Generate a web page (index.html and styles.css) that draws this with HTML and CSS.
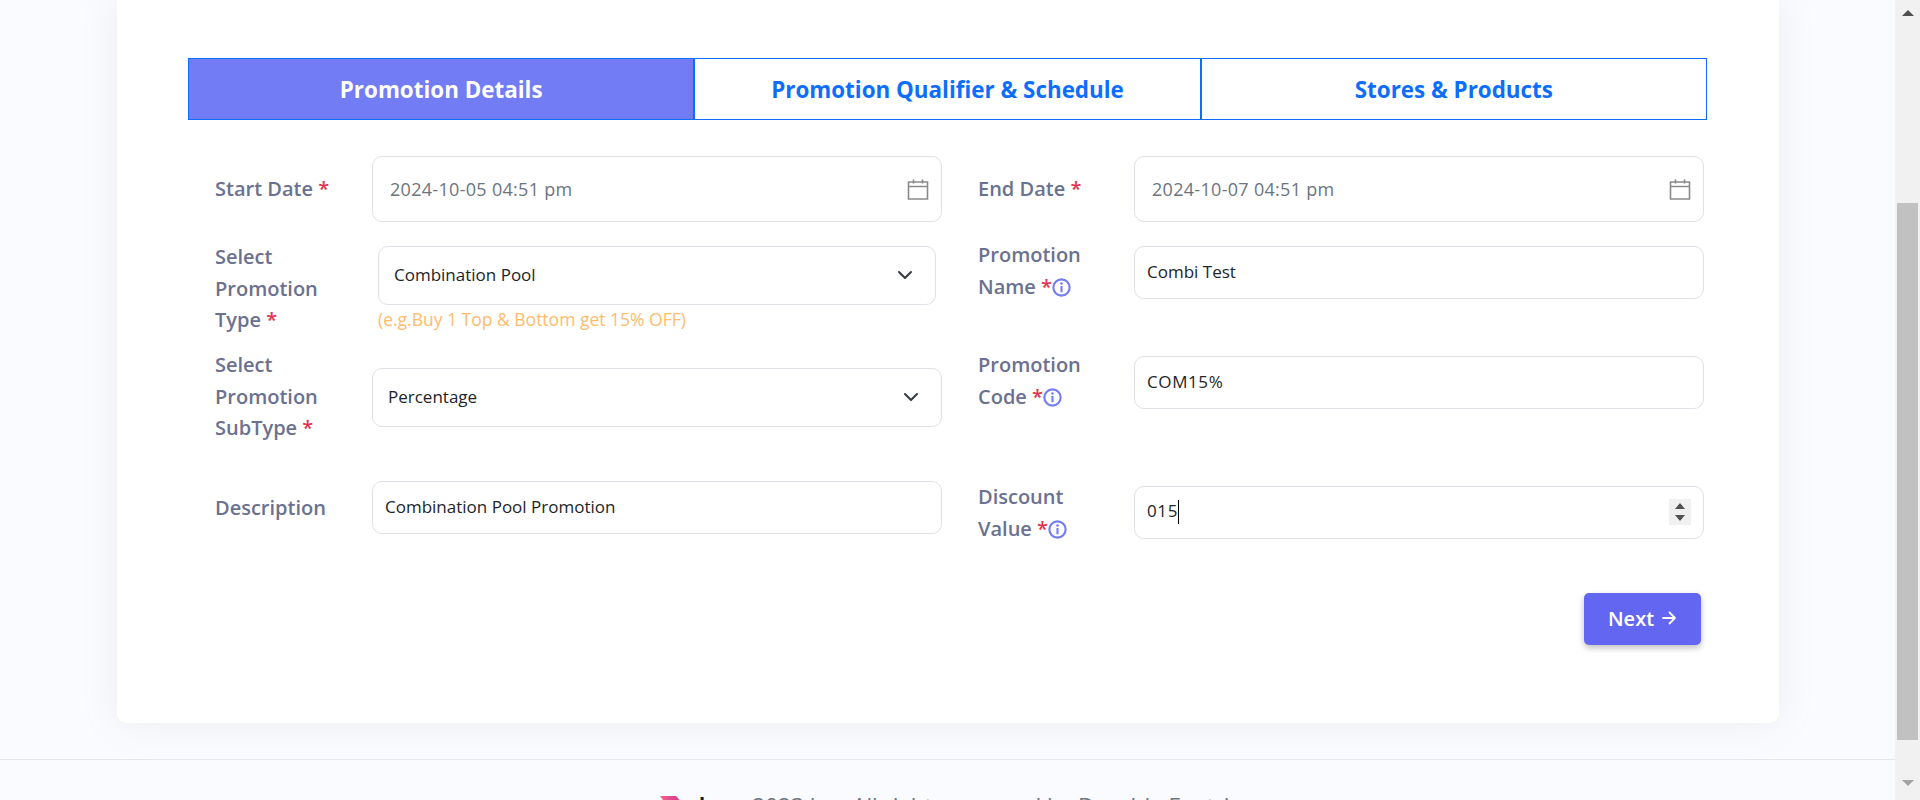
FILE: index.html
```html
<!DOCTYPE html>
<html>
<head>
    <title>Promotion Details</title>
    <link rel="stylesheet" href="styles.css">
</head>
<body>
    <div class="app">
        <div class="page">
            <div class="card">
                <div class="tabs">
                    <div class="tab active">Promotion Details</div>
                    <div class="tab">Promotion Qualifier &amp; Schedule</div>
                    <div class="tab">Stores &amp; Products</div>
                </div>

                <div class="formRow rowDates">
                    <div class="field fieldLeft">
                        <label class="label">Start Date <span class="req">*</span></label>
                        <div class="control dateBox">
                            <span class="dateText">2024-10-05 04:51 pm</span>
                            <svg class="calIcon" width="22" height="22" viewBox="0 0 22 22" fill="none" stroke="#8a8a8a" stroke-width="1.6"><path d="M1.5 4h19v17h-19zM1.5 8.5h19M6.5 1.5v4M15.5 1.5v4"/></svg>
                        </div>
                    </div>
                    <div class="field fieldRight">
                        <label class="label">End Date <span class="req">*</span></label>
                        <div class="control dateBox">
                            <span class="dateText">2024-10-07 04:51 pm</span>
                            <svg class="calIcon" width="22" height="22" viewBox="0 0 22 22" fill="none" stroke="#8a8a8a" stroke-width="1.6"><path d="M1.5 4h19v17h-19zM1.5 8.5h19M6.5 1.5v4M15.5 1.5v4"/></svg>
                        </div>
                    </div>
                </div>

                <div class="formRow rowType">
                    <div class="field fieldLeft top">
                        <label class="label labelType">Select Promotion Type <span class="req">*</span></label>
                        <div class="typeWrap">
                            <div class="control selectBox">
                                <span>Combination Pool</span>
                                <svg class="chev" width="16" height="16" viewBox="0 0 16 16" fill="none" stroke="#343a40" stroke-width="2" stroke-linecap="round" stroke-linejoin="round"><path d="M2 5l6 6 6-6"/></svg>
                            </div>
                            <div class="hint">(e.g.Buy 1 Top &amp; Bottom get 15% OFF)</div>
                        </div>
                    </div>
                    <div class="field fieldRight top">
                        <label class="label">Promotion Name <span class="req">*</span><svg class="info" width="19" height="19" viewBox="0 0 18 18"><circle cx="9" cy="9" r="7.7" fill="none" stroke="#727cf5" stroke-width="2"/><circle cx="9" cy="5.2" r="1.2" fill="#727cf5"/><rect x="8" y="7.5" width="2" height="6" fill="#727cf5"/></svg></label>
                        <div class="control textBox offset7">Combi Test</div>
                    </div>
                </div>

                <div class="formRow rowSub">
                    <div class="field fieldLeft top">
                        <label class="label">Select Promotion SubType <span class="req">*</span></label>
                        <div class="control selectBox subBox">
                            <span>Percentage</span>
                            <svg class="chev" width="16" height="16" viewBox="0 0 16 16" fill="none" stroke="#343a40" stroke-width="2" stroke-linecap="round" stroke-linejoin="round"><path d="M2 5l6 6 6-6"/></svg>
                        </div>
                    </div>
                    <div class="field fieldRight top">
                        <label class="label">Promotion Code <span class="req">*</span><svg class="info" width="19" height="19" viewBox="0 0 18 18"><circle cx="9" cy="9" r="7.7" fill="none" stroke="#727cf5" stroke-width="2"/><circle cx="9" cy="5.2" r="1.2" fill="#727cf5"/><rect x="8" y="7.5" width="2" height="6" fill="#727cf5"/></svg></label>
                        <div class="control textBox offset7"><span class="numValue">COM15%</span></div>
                    </div>
                </div>

                <div class="formRow rowLast">
                    <div class="field fieldLeft">
                        <label class="label">Description</label>
                        <div class="control textBox">Combination Pool Promotion</div>
                    </div>
                    <div class="field fieldRight discount">
                        <label class="label">Discount Value <span class="req">*</span><svg class="info" width="19" height="19" viewBox="0 0 18 18"><circle cx="9" cy="9" r="7.7" fill="none" stroke="#727cf5" stroke-width="2"/><circle cx="9" cy="5.2" r="1.2" fill="#727cf5"/><rect x="8" y="7.5" width="2" height="6" fill="#727cf5"/></svg></label>
                        <div class="control textBox numberBox">
                            <span class="numValue">015<span class="caret"></span></span>
                            <div class="spinner">
                                <span class="spinUp"></span>
                                <span class="spinDown"></span>
                            </div>
                        </div>
                    </div>
                </div>

                <div class="actions">
                    <button class="nextBtn">Next <svg width="16" height="16" viewBox="0 0 16 16" fill="none" stroke="#fff" stroke-width="1.8" stroke-linecap="round" stroke-linejoin="round"><path d="M2 8h12M8.5 2.5L14 8l-5.5 5.5"/></svg></button>
                </div>
            </div>

            <div class="footer">
                <svg class="footLogo" width="24" height="20" viewBox="0 0 24 20"><defs><linearGradient id="logoGrad" x1="0" y1="0" x2="1" y2="0"><stop offset="0" stop-color="#f0648c"/><stop offset="1" stop-color="#d6308f"/></linearGradient></defs><path d="M0 0h16l8 9-8 11H8l6-11-5-5H3z" fill="url(#logoGrad)"/></svg>
                <span class="footBrand">bee</span>
                <span class="footText">2023 Inc. All rights reserved by Dyeable Fantrim</span>
            </div>
        </div>

        <div class="scrollbar">
            <span class="arrowUp"></span>
            <div class="thumb"></div>
            <span class="arrowDown"></span>
        </div>
    </div>
</body>
</html>
```

FILE: styles.css
```css
*{
    box-sizing: border-box;
}
html, body{
    height: 800px;
    overflow: hidden;
}
body{
    margin: 0;
    background-color: #fafbfe;
    font-family: "Open Sans", "Noto Sans", sans-serif;
}
.app{
    display: flex;
    height: 800px;
    overflow: hidden;
}
.page{
    flex: 1;
    min-width: 0;
    height: 800px;
    overflow: hidden;
}
.card{
    height: 723px;
    margin: 0 116px 36px 117px;
    padding: 58px 72px 0 71px;
    background-color: #fff;
    border-radius: 0 0 10px 10px;
    box-shadow: 0 0 35px 0 rgba(154,161,171,.15);
}

/* tabs */
.tabs{
    display: grid;
    grid-template-columns: repeat(3,1fr);
    height: 62px;
    margin-bottom: 36px;
}
.tab{
    display: flex;
    align-items: center;
    justify-content: center;
    font-size: 22.4px;
    font-weight: 700;
    color: #0d6efd;
    border: 1px solid #0d6efd;
}
.tab.active{
    color: #fff;
    background-color: #727cf5;
}

/* form rows */
.formRow{
    display: grid;
    grid-template-columns: 763px 756px;
}
.rowDates{
    height: 83px;
}
.rowType{
    height: 110px;
}
.rowSub{
    height: 132px;
}
.rowLast{
    height: 58px;
    align-items: start;
}
.field{
    display: flex;
    align-items: center;
}
.field.top{
    align-items: flex-start;
}
.fieldLeft{
    padding: 0 9px 0 27px;
}
.fieldRight{
    padding: 0 3px 0 27px;
}
.rowDates .field{
    align-items: flex-start;
}
.rowDates .label{
    line-height: 65px;
}
.label{
    flex: 0 0 157px;
    width: 157px;
    padding-right: 20px;
    font-size: 20px;
    font-weight: 600;
    line-height: 31.5px;
    color: #6b7190;
}
.fieldRight .label{
    flex-basis: 156px;
    width: 156px;
}
.labelType{
    margin-top: 2px;
}
.req{
    color: #e3344f;
}
.info{
    vertical-align: -3px;
}

/* controls */
.control{
    flex: 1;
    min-width: 0;
    display: flex;
    align-items: center;
    justify-content: space-between;
    font-size: 17px;
    color: #212529;
    background-color: #fff;
    border: 1px solid #dee2e6;
    border-radius: 10px;
}
.dateBox{
    height: 66px;
    padding: 0 12px 1px 17px;
}
.dateText{
    font-size: 18px;
    letter-spacing: .3px;
    color: #6c757d;
}
.selectBox{
    height: 59px;
    padding: 0 22px 2px 15px;
}
.subBox{
    margin-top: 19px;
}
.typeWrap{
    flex: 1;
    min-width: 0;
    margin: 7px 6px 0;
}
.hint{
    margin-top: 2px;
    font-size: 17.5px;
    color: #ffbc6b;
}
.textBox{
    height: 53px;
    padding: 0 12px 2px;
}
.offset7{
    margin-top: 7px;
}
.discount{
    height: 53px;
    margin-top: 5px;
}
.numValue{
    letter-spacing: .6px;
}
.caret{
    display: inline-block;
    width: 1px;
    height: 24px;
    vertical-align: middle;
    background-color: #000;
}
.spinner{
    display: flex;
    flex-direction: column;
    align-items: center;
    justify-content: center;
    gap: 6px;
    width: 22px;
    height: 26px;
    background-color: #f0f0f0;
}
.spinUp{
    border-left: 5px solid transparent;
    border-right: 5px solid transparent;
    border-bottom: 6px solid #505050;
}
.spinDown{
    border-left: 5px solid transparent;
    border-right: 5px solid transparent;
    border-top: 6px solid #505050;
}

/* button */
.actions{
    display: flex;
    justify-content: flex-end;
    padding-right: 6px;
    margin-top: 54px;
}
.nextBtn{
    display: flex;
    align-items: center;
    justify-content: center;
    gap: 7px;
    height: 52px;
    width: 117px;
    padding: 0 0 2px;
    font-family: inherit;
    font-size: 20px;
    font-weight: 600;
    color: #fff;
    background-color: #6366f1;
    border: none;
    border-radius: 5px;
    box-shadow: 0 3px 6px rgba(0,0,0,.25);
}

/* footer */
.footer{
    display: flex;
    align-items: flex-start;
    padding: 36px 0 0 660px;
    border-top: 1px solid #e5e7ee;
    color: #6c757d;
    font-size: 20px;
    line-height: 24px;
}
.footLogo{
    flex: none;
}
.footBrand{
    margin: -3px 0 0 15px;
    color: #0b1b3f;
    font-weight: 700;
}
.footText{
    margin: -2.5px 0 0 17px;
    font-size: 22.5px;
    white-space: nowrap;
}

/* scrollbar */
.scrollbar{
    flex: 0 0 25px;
    height: 800px;
    display: flex;
    flex-direction: column;
    align-items: center;
    background-color: #f1f1f1;
}
.arrowUp{
    margin-top: 10px;
    border-left: 6px solid transparent;
    border-right: 6px solid transparent;
    border-bottom: 6px solid #505050;
}
.thumb{
    width: 21px;
    height: 537px;
    margin-top: 187px;
    background-color: #c1c1c1;
}
.arrowDown{
    margin-top: 40px;
    border-left: 6px solid transparent;
    border-right: 6px solid transparent;
    border-top: 6px solid #a3a3a3;
}
```
